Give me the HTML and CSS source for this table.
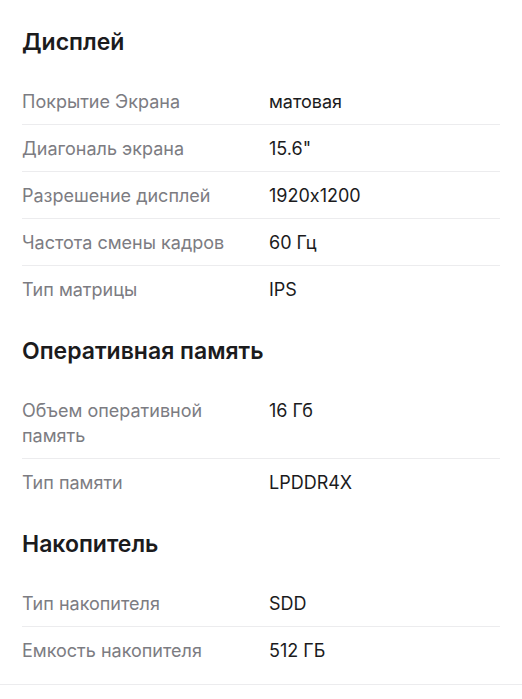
FILE: index.html
```html
<!DOCTYPE html>
<html lang="ru">
<head>
<meta charset="utf-8">
<link rel="stylesheet" href="styles.css">
</head>
<body>
<div class="page">
  <section class="group">
    <h2 class="group-title">Дисплей</h2>
    <div class="rows">
      <div class="row"><div class="label">Покрытие Экрана</div><div class="value">матовая</div></div>
      <div class="row"><div class="label">Диагональ экрана</div><div class="value">15.6"</div></div>
      <div class="row"><div class="label">Разрешение дисплей</div><div class="value">1920x1200</div></div>
      <div class="row"><div class="label">Частота смены кадров</div><div class="value">60 Гц</div></div>
      <div class="row"><div class="label">Тип матрицы</div><div class="value">IPS</div></div>
    </div>
  </section>
  <section class="group">
    <h2 class="group-title">Оперативная память</h2>
    <div class="rows">
      <div class="row"><div class="label">Объем оперативной память</div><div class="value">16 Гб</div></div>
      <div class="row"><div class="label">Тип памяти</div><div class="value">LPDDR4X</div></div>
    </div>
  </section>
  <section class="group">
    <h2 class="group-title">Накопитель</h2>
    <div class="rows">
      <div class="row"><div class="label">Тип накопителя</div><div class="value">SDD</div></div>
      <div class="row"><div class="label">Емкость накопителя</div><div class="value">512 ГБ</div></div>
    </div>
  </section>
  <div class="bottom-rule"></div>
</div>
</body>
</html>
```
FILE: styles.css
```css
* { box-sizing: border-box; }
html, body { margin: 0; padding: 0; background: #ffffff; }
body {
  font-family: Inter, "Noto Sans", "DejaVu Sans", sans-serif;
  font-feature-settings: "calt" 0;
  color: #1b1b1d;
}
.page {
  padding-top: 24px;
}
.group {
  padding: 0 22px;
}
.group + .group {
  margin-top: 21px;
}
.group-title {
  margin: 0;
  height: 36px;
  line-height: 37px;
  font-size: 23px;
  font-weight: 600;
  color: #1b1b1d;
}
.rows {
  margin-top: 18px;
}
.row {
  display: grid;
  grid-template-columns: 247px 1fr;
  padding: 11px 0 10px;
  font-size: 18px;
  line-height: 25px;
  border-bottom: 1px solid #ececee;
}
.row:last-child {
  border-bottom: none;
}
.label {
  color: #7c7c82;
  padding-right: 20px;
}
.value {
  color: #1b1b1d;
}
.bottom-rule {
  margin-top: 11px;
  height: 1px;
  background: #ececee;
}
```
